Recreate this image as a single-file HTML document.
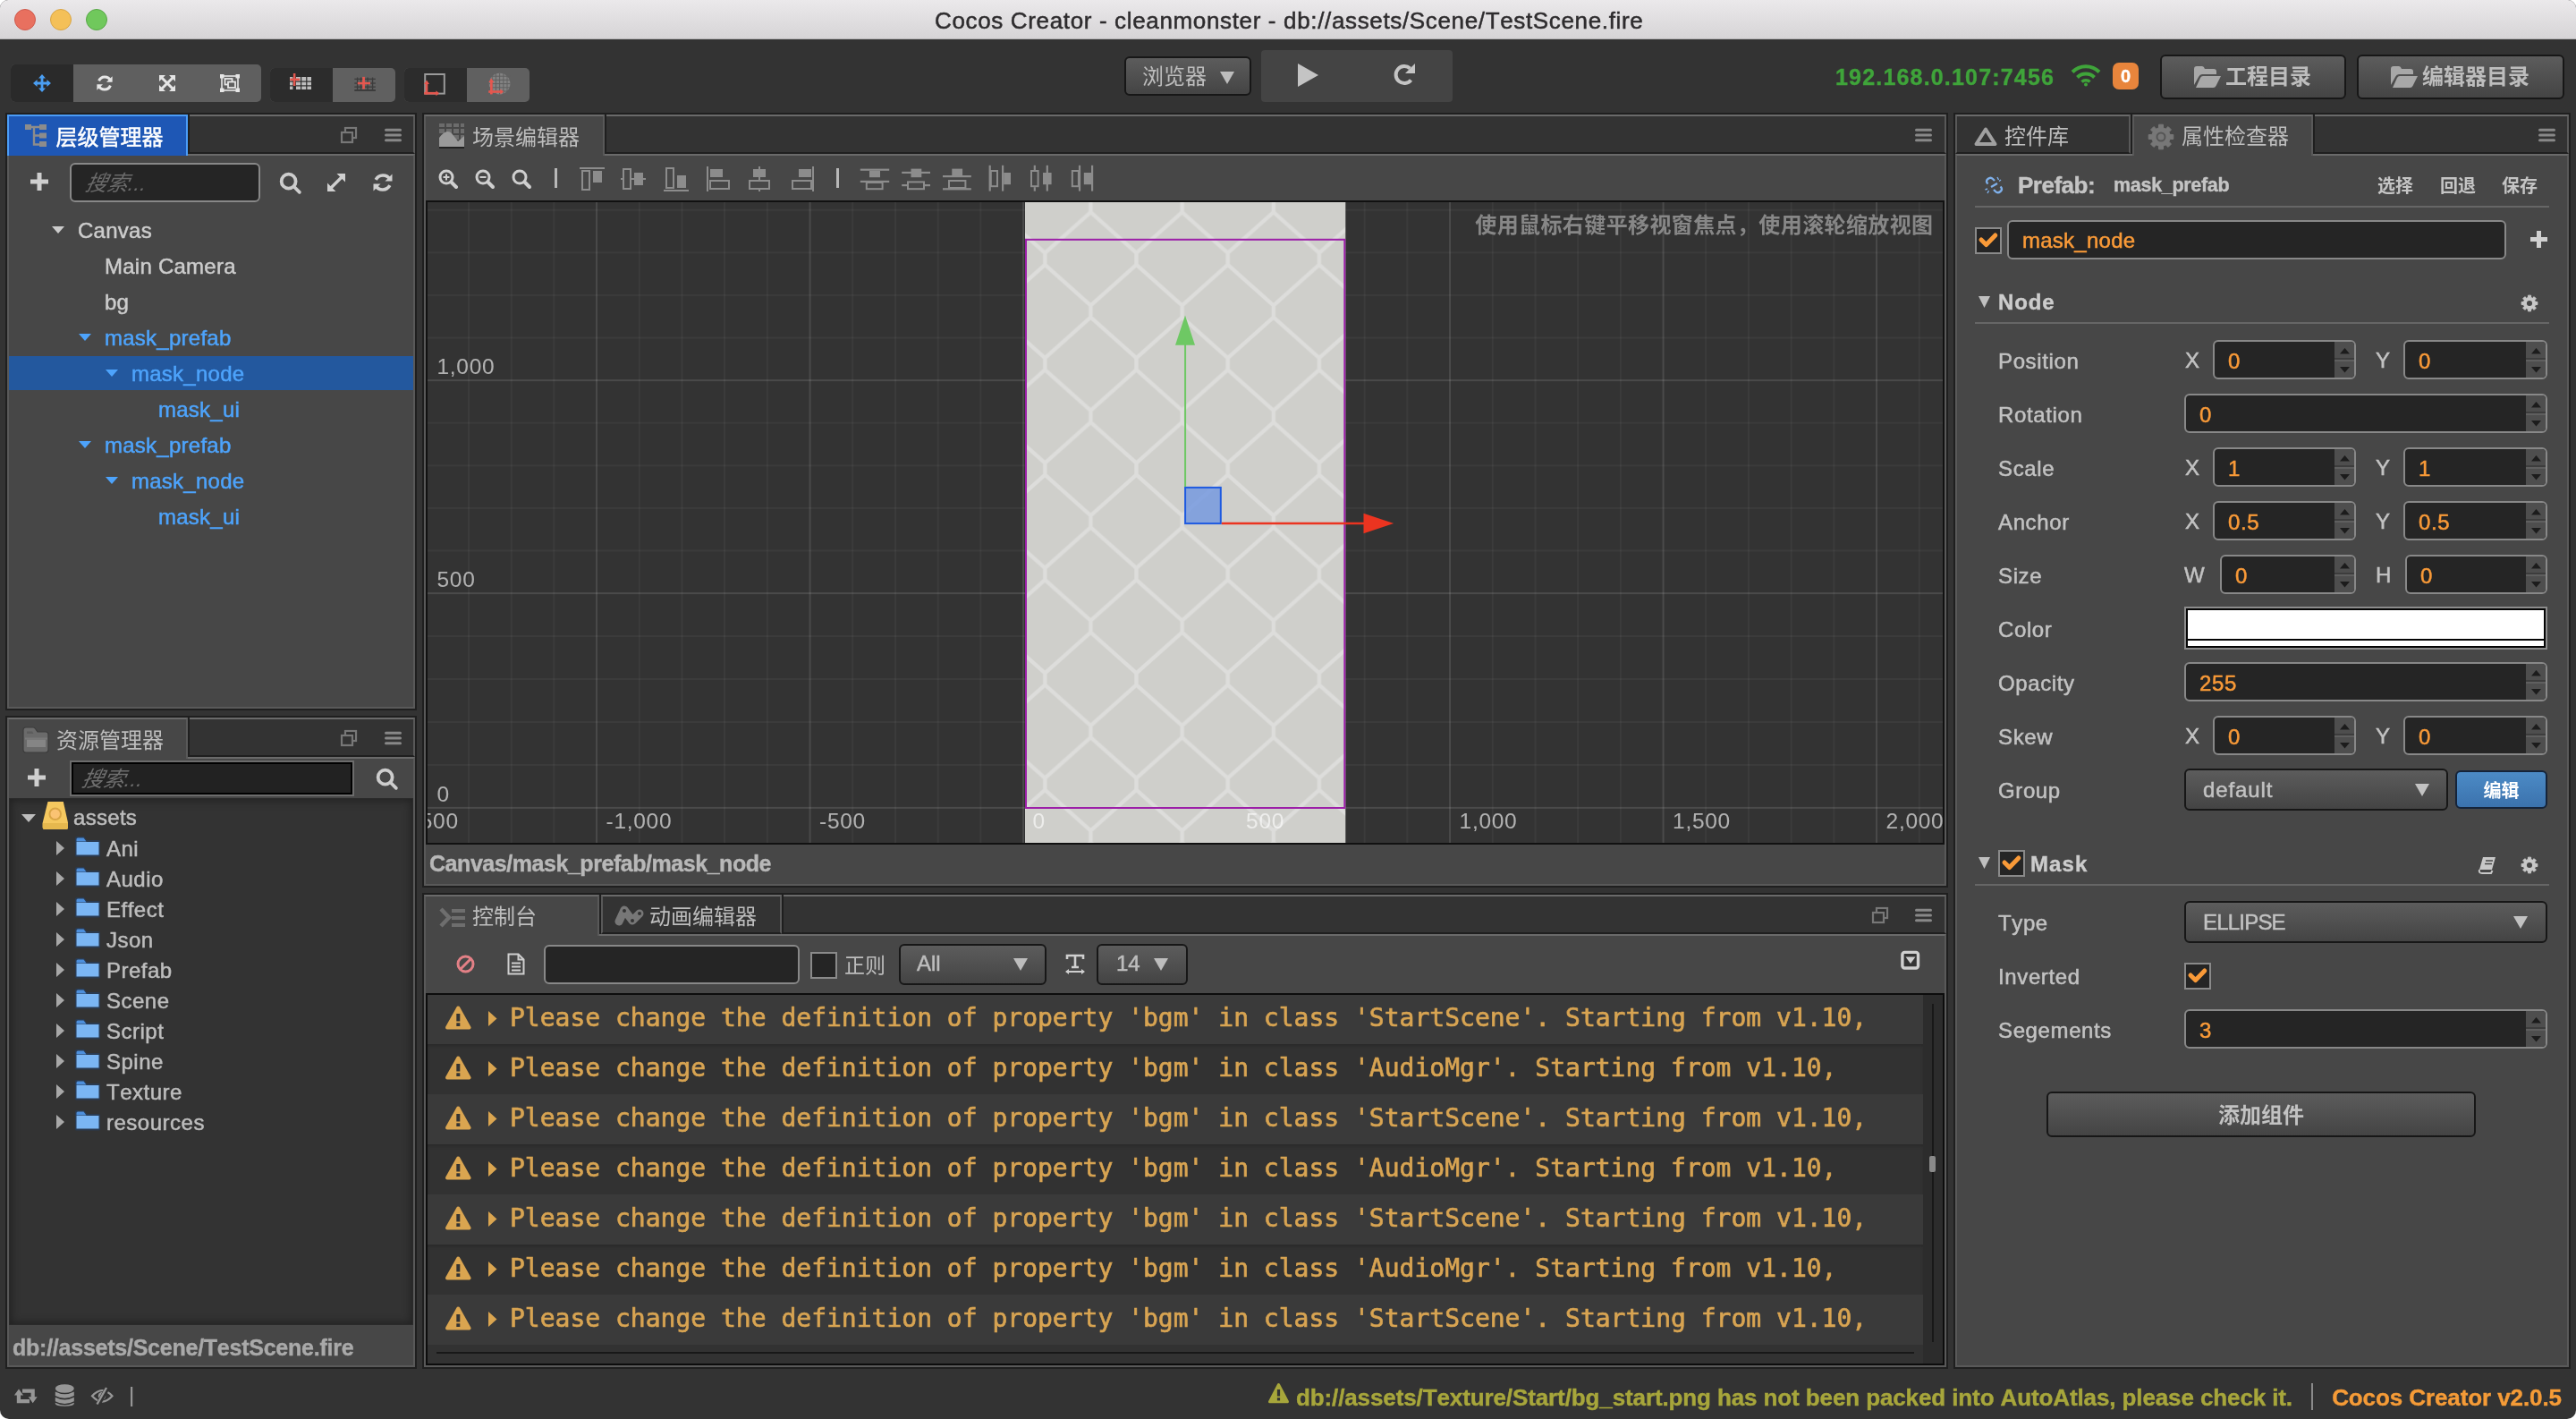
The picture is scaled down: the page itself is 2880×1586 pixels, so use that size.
<!DOCTYPE html>
<html lang="zh"><head><meta charset="utf-8"><title>Cocos Creator - cleanmonster - db://assets/Scene/TestScene.fire</title>
<style>
html,body{margin:0;padding:0;background:#fff;}
body{width:2880px;height:1586px;overflow:hidden;font-family:"Liberation Sans","Noto Sans CJK SC",sans-serif;font-kerning:none;}
#win{position:absolute;left:0;top:0;width:2880px;height:1586px;background:#333333;will-change:transform;border-radius:9px 9px 10px 10px;overflow:hidden;}
.a{position:absolute;box-sizing:border-box;}
.t{position:absolute;white-space:nowrap;-webkit-text-stroke:0.5px currentColor;}
.m{font-family:"DejaVu Sans Mono","Liberation Mono",monospace;}
svg{position:absolute;overflow:visible;}
.inp{position:absolute;box-sizing:border-box;background:#252525;border:2px solid #888;border-radius:6px;}
.btn{position:absolute;box-sizing:border-box;border:2px solid #171717;border-radius:6px;background:linear-gradient(#5c5c5c,#444444);}
</style></head><body><div id="win">
<div class="a" style="left:0px;top:0px;width:2880px;height:44px;background:linear-gradient(#ebe9eb,#d6d4d6);border-bottom:1px solid #b4b2b4;"></div>
<div class="a" style="left:16px;top:10px;width:24px;height:24px;background:#e8705f;border-radius:50%;border:1px solid #cf5a4d;"></div>
<div class="a" style="left:56px;top:10px;width:24px;height:24px;background:#f4c058;border-radius:50%;border:1px solid #d9a545;"></div>
<div class="a" style="left:96px;top:10px;width:24px;height:24px;background:#70c85c;border-radius:50%;border:1px solid #58a748;"></div>
<div class="t " style="top:-3px;height:52px;line-height:52px;font-size:26px;color:#2e2c2e;letter-spacing:0.65px;left:1045px;">Cocos Creator - cleanmonster - db://assets/Scene/TestScene.fire</div>
<div class="a" style="left:12px;top:72px;width:280px;height:42px;background:#5f5f5f;border-radius:5px;"></div>
<div class="a" style="left:12px;top:72px;width:70px;height:42px;background:#2a2a2a;border-radius:5px 0 0 5px;"></div>
<svg style="left:37px;top:83px;" width="20" height="20" viewBox="0 0 20 20"><path d="M10 0l4 4.6h-2.6v4h4V6l4.6 4-4.6 4v-2.600h-4v4h2.600L10 20l-4-4.600h2.600v-4h-4V14L0 10l4.600-4v2.600h4v-4H6z" fill="#4a9ef2"/></svg>
<svg style="left:108px;top:84px;" width="18" height="18" viewBox="0 0 18 18"><path d="M15.500 6.200A7 7 0 0 0 2.600 6.400" fill="none" stroke="#e6e6e6" stroke-width="3"/><path d="M17.600 1.200v6.600h-6.600z" fill="#e6e6e6"/><path d="M2.500 11.800A7 7 0 0 0 15.400 11.600" fill="none" stroke="#e6e6e6" stroke-width="3"/><path d="M0.400 16.800v-6.600h6.600z" fill="#e6e6e6"/></svg>
<svg style="left:178px;top:84px;" width="18" height="18" viewBox="0 0 18 18"><path d="M3 3L15 15M15 3L3 15" stroke="#e6e6e6" stroke-width="3"/><path d="M0 0h7L0 7zM18 0v7L11 0zM0 18v-7l7 7zM18 18h-7l7-7z" fill="#e6e6e6"/></svg>
<svg style="left:246px;top:83px;" width="22" height="20" viewBox="0 0 22 20"><rect x="2" y="2" width="18" height="16" fill="none" stroke="#e6e6e6" stroke-width="1.600"/><rect x="0" y="0" width="4.500" height="4.500" fill="#e6e6e6"/><rect x="17.500" y="0" width="4.500" height="4.500" fill="#e6e6e6"/><rect x="0" y="15.500" width="4.500" height="4.500" fill="#e6e6e6"/><rect x="17.500" y="15.500" width="4.500" height="4.500" fill="#e6e6e6"/><rect x="5.500" y="5" width="8" height="6.500" fill="none" stroke="#e6e6e6" stroke-width="1.800"/><rect x="9" y="8.500" width="8" height="6.500" fill="#5f5f5f" stroke="#e6e6e6" stroke-width="1.800"/></svg>
<div class="a" style="left:302px;top:76px;width:140px;height:38px;background:#606060;border-radius:5px;"></div>
<div class="a" style="left:302px;top:76px;width:70px;height:38px;background:#2c2c2c;border-radius:5px 0 0 5px;"></div>
<div class="a" style="left:452px;top:76px;width:140px;height:38px;background:#606060;border-radius:5px;"></div>
<div class="a" style="left:452px;top:76px;width:70px;height:38px;background:#2c2c2c;border-radius:5px 0 0 5px;"></div>
<svg style="left:300px;top:74px;" width="296" height="42" viewBox="300 74 296 42"><rect x="324" y="86" width="3.4" height="4.5" fill="#bdbdbd"/><rect x="331" y="86" width="5.0" height="4.5" fill="#bdbdbd"/><rect x="337.2" y="86" width="5.0" height="4.5" fill="#bdbdbd"/><rect x="343.4" y="86" width="4.6" height="4.5" fill="#bdbdbd"/><rect x="324" y="91.7" width="3.4" height="3.6" fill="#bdbdbd"/><rect x="331" y="91.7" width="5.0" height="3.6" fill="#bdbdbd"/><rect x="337.2" y="91.7" width="5.0" height="3.6" fill="#bdbdbd"/><rect x="343.4" y="91.7" width="4.6" height="3.6" fill="#bdbdbd"/><rect x="324" y="96.5" width="3.4" height="3.5" fill="#bdbdbd"/><rect x="331" y="96.5" width="5.0" height="3.5" fill="#bdbdbd"/><rect x="337.2" y="96.5" width="5.0" height="3.5" fill="#bdbdbd"/><rect x="343.4" y="96.5" width="4.6" height="3.5" fill="#bdbdbd"/><rect x="327.900" y="82" width="2.500" height="14" fill="#e5574f"/><rect x="324.300" y="87.600" width="10.700" height="2.500" fill="#e5574f"/><rect x="396.300" y="87.7" width="23.600" height="1.300" fill="#3c3c3c"/><rect x="396.300" y="92.4" width="23.600" height="1.300" fill="#3c3c3c"/><rect x="396.300" y="96.5" width="23.600" height="1.300" fill="#3c3c3c"/><rect x="396.300" y="100" width="23.600" height="2" fill="#3c3c3c"/><rect x="398.9" y="86.500" width="1.300" height="14" fill="#3c3c3c"/><rect x="402.9" y="86.500" width="1.300" height="14" fill="#3c3c3c"/><rect x="410.4" y="86.500" width="1.300" height="14" fill="#3c3c3c"/><rect x="415.9" y="86.500" width="1.300" height="14" fill="#3c3c3c"/><rect x="405.200" y="85.900" width="2.700" height="13.600" fill="#e5574f"/><rect x="399.800" y="91.800" width="14.200" height="2.500" fill="#e5574f"/><rect x="475.200" y="83" width="21.600" height="21.600" fill="none" stroke="#9a9a9a" stroke-width="2"/><rect x="475.600" y="92" width="2.700" height="13.400" fill="#e5574f"/><rect x="474.200" y="102.900" width="14" height="2.600" fill="#e5574f"/><path d="M474 94L477 89.500L480 94ZM487.500 101.200L491 104.200L487.500 107.200Z" fill="#e5574f"/><circle cx="558.600" cy="93.600" r="11.800" fill="#828282"/><rect x="549.7" y="82" width="1" height="23.500" fill="#606060"/><rect x="547" y="84.7" width="23.500" height="1" fill="#606060"/><rect x="553.9" y="82" width="1" height="23.500" fill="#606060"/><rect x="547" y="88.9" width="23.500" height="1" fill="#606060"/><rect x="558.1" y="82" width="1" height="23.500" fill="#606060"/><rect x="547" y="93.1" width="23.500" height="1" fill="#606060"/><rect x="562.3" y="82" width="1" height="23.500" fill="#606060"/><rect x="547" y="97.3" width="23.500" height="1" fill="#606060"/><rect x="566.5" y="82" width="1" height="23.500" fill="#606060"/><rect x="547" y="101.5" width="23.500" height="1" fill="#606060"/><rect x="548" y="90" width="2.700" height="15.400" fill="#e5574f"/><rect x="546.200" y="101.200" width="14" height="2.600" fill="#e5574f"/><path d="M546.300 92L549.300 87.500L552.300 92ZM559.500 99.500L563 102.500L559.500 105.500Z" fill="#e5574f"/></svg>
<div class="btn" style="left:1257px;top:63px;width:142px;height:44px;"></div>
<div class="t " style="top:62px;height:48px;line-height:48px;font-size:24px;color:#bdbdbd;left:1277px;-webkit-text-stroke:0;">浏览器</div>
<svg style="left:1364.0px;top:80.0px;" width="16" height="14" viewBox="0 0 16 14"><path d="M0 0H16L8.0 14Z" fill="#bdbdbd"/></svg>
<div class="a" style="left:1410px;top:56px;width:214px;height:58px;background:#444444;border-radius:4px;"></div>
<svg style="left:1451px;top:71px;" width="23" height="26" viewBox="0 0 23 26"><path d="M0 0L23 13L0 26Z" fill="#c4c4c4"/></svg>
<svg style="left:1557px;top:70px;" width="26" height="27" viewBox="0 0 26 27"><path d="M20.500 19.500A9.500 9.500 0 1 1 19.500 6.500" fill="none" stroke="#c4c4c4" stroke-width="4"/><path d="M25 1v11h-11z" fill="#c4c4c4"/></svg>
<div class="t " style="top:61px;height:50px;line-height:50px;font-size:25px;color:#3fa43a;font-weight:700;-webkit-text-stroke-width:0.4px;letter-spacing:1.18px;left:2052px;">192.168.0.107:7456</div>
<svg style="left:2315px;top:72px;" width="34" height="24" viewBox="0 0 34 24"><path d="M2 8.500A21 21 0 0 1 32 8.500" fill="none" stroke="#3fa43a" stroke-width="4"/><path d="M7.500 14.500A13.500 13.500 0 0 1 26.500 14.500" fill="none" stroke="#3fa43a" stroke-width="4"/><path d="M12.500 19.500A6.500 6.500 0 0 1 21.500 19.500" fill="none" stroke="#3fa43a" stroke-width="3.600"/><circle cx="17" cy="22.500" r="2" fill="#3fa43a"/></svg>
<div class="a" style="left:2362px;top:70px;width:29px;height:30px;background:#e8853c;border-radius:7px;"></div>
<div class="t " style="top:65px;height:40px;line-height:40px;font-size:20px;color:#fff;font-weight:700;-webkit-text-stroke-width:0.4px;left:1376.5px;width:2000px;text-align:center;">0</div>
<div class="btn" style="left:2415px;top:61px;width:208px;height:50px;"></div>
<svg style="left:2453px;top:74px;" width="30" height="24" viewBox="0 0 30 24"><path d="M0 21V3q0-3 3-3h6q2 0 3 3h10q3 0 3 3v3H9q-2.500 0-4 3z" fill="#a8a8a8"/><path d="M2 24l5-11q1-2 3-2h20l-5.500 11q-1 2-3 2z" fill="#a8a8a8"/></svg>
<div class="t " style="top:62.400000000000006px;height:48px;line-height:48px;font-size:24px;color:#bdbdbd;font-weight:700;-webkit-text-stroke-width:0.4px;left:2488px;-webkit-text-stroke:0;">工程目录</div>
<div class="btn" style="left:2635px;top:61px;width:232px;height:50px;"></div>
<svg style="left:2673px;top:74px;" width="30" height="24" viewBox="0 0 30 24"><path d="M0 21V3q0-3 3-3h6q2 0 3 3h10q3 0 3 3v3H9q-2.500 0-4 3z" fill="#a8a8a8"/><path d="M2 24l5-11q1-2 3-2h20l-5.500 11q-1 2-3 2z" fill="#a8a8a8"/></svg>
<div class="t " style="top:62.400000000000006px;height:48px;line-height:48px;font-size:24px;color:#bdbdbd;font-weight:700;-webkit-text-stroke-width:0.4px;left:2708px;-webkit-text-stroke:0;">编辑器目录</div>
<div class="a" style="left:6px;top:126px;width:460px;height:668px;background:#1f1f1f;"></div>
<div class="a" style="left:8px;top:128px;width:456px;height:44px;background:#333333;border-top:2px solid #6a6a6a;border-left:2px solid #595959;border-right:2px solid #595959;border-bottom:2px solid #1f1f1f;"></div>
<div class="a" style="left:8px;top:172px;width:456px;height:620px;background:#474747;border:2px solid #595959;border-top-color:#6a6a6a;"></div>
<div class="a" style="left:8px;top:128px;width:202px;height:46px;background:#1e57b5;border:2px solid #4b9cf6;border-bottom:none;"></div>
<div class="a" style="left:210px;top:128px;width:2px;height:44px;background:#1f1f1f;"></div>
<svg style="left:28px;top:139px;" width="24" height="26" viewBox="0 0 24 26"><g fill="#8c8c8c"><rect x="0" y="0" width="7" height="6"/><rect x="16" y="0" width="8" height="6"/><rect x="16" y="9.500" width="8" height="6"/><rect x="16" y="19" width="8" height="6"/></g><path d="M7 3h9M10 3v19.500h6M10 12.500h6" fill="none" stroke="#8c8c8c" stroke-width="2.400"/></svg>
<div class="t " style="top:129.6px;height:48px;line-height:48px;font-size:24px;color:#ffffff;left:62.5px;-webkit-text-stroke:0;-webkit-text-stroke:0.45px #fff;">层级管理器</div>
<svg style="left:381px;top:142px;" width="18" height="18" viewBox="0 0 18 18"><rect x="5" y="1" width="12" height="11" fill="#2c2c2c" stroke="#777" stroke-width="2.200"/><rect x="1" y="6" width="12" height="11" fill="#333" stroke="#777" stroke-width="2.200"/></svg>
<svg style="left:429.5px;top:143px;" width="19" height="16" viewBox="0 0 19 16"><path d="M1.500 2.200h16M1.500 8h16M1.500 13.800h16" stroke="#888" stroke-width="3" stroke-linecap="round" fill="none"/></svg>
<svg style="left:34.0px;top:193.0px;" width="20" height="20" viewBox="0 0 20 20"><path d="M10.0 0V20M0 10.0H20" stroke="#cfcfcf" stroke-width="5" /></svg>
<div class="inp" style="left:78px;top:182px;width:213px;height:43.5px;"></div>
<div class="t " style="top:181px;height:48px;line-height:48px;font-size:24px;color:#6a6a6a;left:96px;-webkit-text-stroke:0;font-style:italic;transform:skewX(-12deg);">搜索...</div>
<svg style="left:312.75px;top:193.05px;" width="23.5" height="23.5" viewBox="0 0 23.5 23.5"><circle cx="9.635" cy="9.635" r="7.99" fill="none" stroke="#cdcdcd" stroke-width="3.7600000000000002"/><path d="M15.510000000000002 15.510000000000002L21.855 21.855" stroke="#cdcdcd" stroke-width="3.7600000000000002" stroke-linecap="round"/></svg>
<svg style="left:366px;top:194px;" width="20" height="20" viewBox="0 0 20 20"><path d="M4 16L16 4" stroke="#cfcfcf" stroke-width="3.400"/><path d="M10.500 0H20V9.500zM0 10.500V20H9.500z" fill="#cfcfcf"/></svg>
<svg style="left:417.0px;top:193.0px;" width="22" height="22" viewBox="0 0 22 22"><path d="M19 7.500A9 9 0 0 0 3.200 7.800" fill="none" stroke="#cfcfcf" stroke-width="3.600"/><path d="M21.500 1.500v8h-8z" fill="#cfcfcf"/><path d="M3 14.500A9 9 0 0 0 18.800 14.200" fill="none" stroke="#cfcfcf" stroke-width="3.600"/><path d="M0.500 20.500v-8h8z" fill="#cfcfcf"/></svg>
<svg style="left:58.0px;top:253.0px;" width="14" height="8" viewBox="0 0 14 8"><path d="M0 0H14L7.0 8Z" fill="#cccccc"/></svg>
<div class="t " style="top:234px;height:48px;line-height:48px;font-size:24px;color:#cccccc;letter-spacing:0.25px;left:87px;">Canvas</div>
<div class="t " style="top:274px;height:48px;line-height:48px;font-size:24px;color:#cccccc;letter-spacing:0.25px;left:117px;">Main Camera</div>
<div class="t " style="top:314px;height:48px;line-height:48px;font-size:24px;color:#cccccc;letter-spacing:0.25px;left:117px;">bg</div>
<svg style="left:88.0px;top:373.0px;" width="14" height="8" viewBox="0 0 14 8"><path d="M0 0H14L7.0 8Z" fill="#4da3fb"/></svg>
<div class="t " style="top:354px;height:48px;line-height:48px;font-size:24px;color:#4da3fb;letter-spacing:0.25px;left:117px;">mask_prefab</div>
<div class="a" style="left:10px;top:398px;width:452px;height:38px;background:#23589e;"></div>
<svg style="left:118.0px;top:413.0px;" width="14" height="8" viewBox="0 0 14 8"><path d="M0 0H14L7.0 8Z" fill="#4da3fb"/></svg>
<div class="t " style="top:394px;height:48px;line-height:48px;font-size:24px;color:#4da3fb;letter-spacing:0.25px;left:147px;">mask_node</div>
<div class="t " style="top:434px;height:48px;line-height:48px;font-size:24px;color:#4da3fb;letter-spacing:0.25px;left:177px;">mask_ui</div>
<svg style="left:88.0px;top:493.0px;" width="14" height="8" viewBox="0 0 14 8"><path d="M0 0H14L7.0 8Z" fill="#4da3fb"/></svg>
<div class="t " style="top:474px;height:48px;line-height:48px;font-size:24px;color:#4da3fb;letter-spacing:0.25px;left:117px;">mask_prefab</div>
<svg style="left:118.0px;top:533.0px;" width="14" height="8" viewBox="0 0 14 8"><path d="M0 0H14L7.0 8Z" fill="#4da3fb"/></svg>
<div class="t " style="top:514px;height:48px;line-height:48px;font-size:24px;color:#4da3fb;letter-spacing:0.25px;left:147px;">mask_node</div>
<div class="t " style="top:554px;height:48px;line-height:48px;font-size:24px;color:#4da3fb;letter-spacing:0.25px;left:177px;">mask_ui</div>
<div class="a" style="left:6px;top:800px;width:460px;height:730px;background:#1f1f1f;"></div>
<div class="a" style="left:8px;top:802px;width:456px;height:44px;background:#333333;border-top:2px solid #6a6a6a;border-left:2px solid #595959;border-right:2px solid #595959;border-bottom:2px solid #1f1f1f;"></div>
<div class="a" style="left:8px;top:846px;width:456px;height:682px;background:#474747;border:2px solid #595959;border-top-color:#6a6a6a;"></div>
<div class="a" style="left:8px;top:802px;width:202px;height:46px;background:#474747;border-top:2px solid #6a6a6a;border-left:2px solid #595959;border-right:2px solid #595959;"></div>
<div class="a" style="left:210px;top:802px;width:2px;height:44px;background:#1f1f1f;"></div>
<svg style="left:25px;top:812px;" width="31" height="30" viewBox="0 0 31 30"><path d="M1 4q0-3 3-3h8q1.500 0 2.500 1.500l2.500 3.500h9q3 0 3 3v17q0 3-3 3H4q-3 0-3-3z" fill="#6b6b6b" stroke="#3c3c3c" stroke-width="1.200"/><path d="M5 5.500h6l1.500 2.500H5z" fill="#5c5c5c"/><rect x="5" y="14.500" width="21" height="8.500" fill="#858585"/><rect x="3" y="12.500" width="25" height="2" fill="#7a7a7a"/></svg>
<div class="t " style="top:803.5px;height:48px;line-height:48px;font-size:24px;color:#bdbdbd;left:63px;-webkit-text-stroke:0;">资源管理器</div>
<svg style="left:381px;top:816px;" width="18" height="18" viewBox="0 0 18 18"><rect x="5" y="1" width="12" height="11" fill="#2c2c2c" stroke="#777" stroke-width="2.200"/><rect x="1" y="6" width="12" height="11" fill="#333" stroke="#777" stroke-width="2.200"/></svg>
<svg style="left:429.5px;top:817px;" width="19" height="16" viewBox="0 0 19 16"><path d="M1.500 2.200h16M1.500 8h16M1.500 13.800h16" stroke="#888" stroke-width="3" stroke-linecap="round" fill="none"/></svg>
<svg style="left:31.0px;top:859.0px;" width="20" height="20" viewBox="0 0 20 20"><path d="M10.0 0V20M0 10.0H20" stroke="#cfcfcf" stroke-width="5" /></svg>
<div class="a" style="left:78px;top:850px;width:318px;height:40px;background:#222222;border:2px solid #6c6c6c;"></div>
<div class="a" style="left:80px;top:852px;width:314px;height:36px;background:#222222;border:2px solid #000;"></div>
<div class="t " style="top:847px;height:48px;line-height:48px;font-size:24px;color:#6e6e6e;left:92px;-webkit-text-stroke:0;font-style:italic;transform:skewX(-12deg);">搜索...</div>
<svg style="left:421.05px;top:858.75px;" width="23.5" height="23.5" viewBox="0 0 23.5 23.5"><circle cx="9.635" cy="9.635" r="7.99" fill="none" stroke="#cdcdcd" stroke-width="3.7600000000000002"/><path d="M15.510000000000002 15.510000000000002L21.855 21.855" stroke="#cdcdcd" stroke-width="3.7600000000000002" stroke-linecap="round"/></svg>
<div class="a" style="left:10px;top:892px;width:452px;height:589px;background:#333333;box-shadow:inset 0 0 10px 2px #232323;border:1px solid #2a2a2a;"></div>
<svg style="left:24.0px;top:910.0px;" width="16" height="9" viewBox="0 0 16 9"><path d="M0 0H16L8.0 9Z" fill="#bdbdbd"/></svg>
<svg style="left:47px;top:895px;" width="30" height="34" viewBox="0 0 30 34"><path d="M6.500 1H23.800L29 24.500V30q0 2-2 2H2.700q-2 0-2-2V24.500Z" fill="#f5c85f"/><path d="M0.700 25H29v5q0 2-2 2H2.700q-2 0-2-2Z" fill="#e6b84e"/><circle cx="14.700" cy="14.800" r="6.300" fill="#fac373" stroke="#d9a545" stroke-width="2"/></svg>
<div class="t " style="top:890px;height:48px;line-height:48px;font-size:24px;color:#bdbdbd;letter-spacing:0.3px;left:82px;">assets</div>
<svg style="left:63.0px;top:940.0px;" width="9" height="16" viewBox="0 0 9 16"><path d="M0 0V16L9 8.0Z" fill="#a8a8a8"/></svg>
<svg style="left:83px;top:933.5px;" width="30" height="24" viewBox="0 0 30 24"><path d="M1 3q0-2 2-2h8l3 4h13q2 0 2 2v15q0 1.500-1.500 1.500h-25q-1.500 0-1.500-1.500z" fill="#2a3b52"/><path d="M2.500 4q0-1.500 1.500-1.500h6.500l3 4h-11z" fill="#4d8fdc"/><path d="M2.500 7h25v14.500h-25z" fill="#7bb6f4"/></svg>
<div class="t " style="top:924.5px;height:48px;line-height:48px;font-size:24px;color:#bdbdbd;letter-spacing:0.5px;left:119px;">Ani</div>
<svg style="left:63.0px;top:974.0px;" width="9" height="16" viewBox="0 0 9 16"><path d="M0 0V16L9 8.0Z" fill="#a8a8a8"/></svg>
<svg style="left:83px;top:967.5px;" width="30" height="24" viewBox="0 0 30 24"><path d="M1 3q0-2 2-2h8l3 4h13q2 0 2 2v15q0 1.500-1.500 1.500h-25q-1.500 0-1.500-1.500z" fill="#2a3b52"/><path d="M2.500 4q0-1.500 1.500-1.500h6.500l3 4h-11z" fill="#4d8fdc"/><path d="M2.500 7h25v14.500h-25z" fill="#7bb6f4"/></svg>
<div class="t " style="top:958.5px;height:48px;line-height:48px;font-size:24px;color:#bdbdbd;letter-spacing:0.5px;left:119px;">Audio</div>
<svg style="left:63.0px;top:1008.0px;" width="9" height="16" viewBox="0 0 9 16"><path d="M0 0V16L9 8.0Z" fill="#a8a8a8"/></svg>
<svg style="left:83px;top:1001.5px;" width="30" height="24" viewBox="0 0 30 24"><path d="M1 3q0-2 2-2h8l3 4h13q2 0 2 2v15q0 1.500-1.500 1.500h-25q-1.500 0-1.500-1.500z" fill="#2a3b52"/><path d="M2.500 4q0-1.500 1.500-1.500h6.500l3 4h-11z" fill="#4d8fdc"/><path d="M2.500 7h25v14.500h-25z" fill="#7bb6f4"/></svg>
<div class="t " style="top:992.5px;height:48px;line-height:48px;font-size:24px;color:#bdbdbd;letter-spacing:0.5px;left:119px;">Effect</div>
<svg style="left:63.0px;top:1042.0px;" width="9" height="16" viewBox="0 0 9 16"><path d="M0 0V16L9 8.0Z" fill="#a8a8a8"/></svg>
<svg style="left:83px;top:1035.5px;" width="30" height="24" viewBox="0 0 30 24"><path d="M1 3q0-2 2-2h8l3 4h13q2 0 2 2v15q0 1.500-1.500 1.500h-25q-1.500 0-1.500-1.500z" fill="#2a3b52"/><path d="M2.500 4q0-1.500 1.500-1.500h6.500l3 4h-11z" fill="#4d8fdc"/><path d="M2.500 7h25v14.500h-25z" fill="#7bb6f4"/></svg>
<div class="t " style="top:1026.5px;height:48px;line-height:48px;font-size:24px;color:#bdbdbd;letter-spacing:0.5px;left:119px;">Json</div>
<svg style="left:63.0px;top:1076.0px;" width="9" height="16" viewBox="0 0 9 16"><path d="M0 0V16L9 8.0Z" fill="#a8a8a8"/></svg>
<svg style="left:83px;top:1069.5px;" width="30" height="24" viewBox="0 0 30 24"><path d="M1 3q0-2 2-2h8l3 4h13q2 0 2 2v15q0 1.500-1.500 1.500h-25q-1.500 0-1.500-1.500z" fill="#2a3b52"/><path d="M2.500 4q0-1.500 1.500-1.500h6.500l3 4h-11z" fill="#4d8fdc"/><path d="M2.500 7h25v14.500h-25z" fill="#7bb6f4"/></svg>
<div class="t " style="top:1060.5px;height:48px;line-height:48px;font-size:24px;color:#bdbdbd;letter-spacing:0.5px;left:119px;">Prefab</div>
<svg style="left:63.0px;top:1110.0px;" width="9" height="16" viewBox="0 0 9 16"><path d="M0 0V16L9 8.0Z" fill="#a8a8a8"/></svg>
<svg style="left:83px;top:1103.5px;" width="30" height="24" viewBox="0 0 30 24"><path d="M1 3q0-2 2-2h8l3 4h13q2 0 2 2v15q0 1.500-1.500 1.500h-25q-1.500 0-1.500-1.500z" fill="#2a3b52"/><path d="M2.500 4q0-1.500 1.500-1.500h6.500l3 4h-11z" fill="#4d8fdc"/><path d="M2.500 7h25v14.500h-25z" fill="#7bb6f4"/></svg>
<div class="t " style="top:1094.5px;height:48px;line-height:48px;font-size:24px;color:#bdbdbd;letter-spacing:0.5px;left:119px;">Scene</div>
<svg style="left:63.0px;top:1144.0px;" width="9" height="16" viewBox="0 0 9 16"><path d="M0 0V16L9 8.0Z" fill="#a8a8a8"/></svg>
<svg style="left:83px;top:1137.5px;" width="30" height="24" viewBox="0 0 30 24"><path d="M1 3q0-2 2-2h8l3 4h13q2 0 2 2v15q0 1.500-1.500 1.500h-25q-1.500 0-1.500-1.500z" fill="#2a3b52"/><path d="M2.500 4q0-1.500 1.500-1.500h6.500l3 4h-11z" fill="#4d8fdc"/><path d="M2.500 7h25v14.500h-25z" fill="#7bb6f4"/></svg>
<div class="t " style="top:1128.5px;height:48px;line-height:48px;font-size:24px;color:#bdbdbd;letter-spacing:0.5px;left:119px;">Script</div>
<svg style="left:63.0px;top:1178.0px;" width="9" height="16" viewBox="0 0 9 16"><path d="M0 0V16L9 8.0Z" fill="#a8a8a8"/></svg>
<svg style="left:83px;top:1171.5px;" width="30" height="24" viewBox="0 0 30 24"><path d="M1 3q0-2 2-2h8l3 4h13q2 0 2 2v15q0 1.500-1.500 1.500h-25q-1.500 0-1.500-1.500z" fill="#2a3b52"/><path d="M2.500 4q0-1.500 1.500-1.500h6.500l3 4h-11z" fill="#4d8fdc"/><path d="M2.500 7h25v14.500h-25z" fill="#7bb6f4"/></svg>
<div class="t " style="top:1162.5px;height:48px;line-height:48px;font-size:24px;color:#bdbdbd;letter-spacing:0.5px;left:119px;">Spine</div>
<svg style="left:63.0px;top:1212.0px;" width="9" height="16" viewBox="0 0 9 16"><path d="M0 0V16L9 8.0Z" fill="#a8a8a8"/></svg>
<svg style="left:83px;top:1205.5px;" width="30" height="24" viewBox="0 0 30 24"><path d="M1 3q0-2 2-2h8l3 4h13q2 0 2 2v15q0 1.500-1.500 1.500h-25q-1.500 0-1.500-1.500z" fill="#2a3b52"/><path d="M2.500 4q0-1.500 1.500-1.500h6.500l3 4h-11z" fill="#4d8fdc"/><path d="M2.500 7h25v14.500h-25z" fill="#7bb6f4"/></svg>
<div class="t " style="top:1196.5px;height:48px;line-height:48px;font-size:24px;color:#bdbdbd;letter-spacing:0.5px;left:119px;">Texture</div>
<svg style="left:63.0px;top:1246.0px;" width="9" height="16" viewBox="0 0 9 16"><path d="M0 0V16L9 8.0Z" fill="#a8a8a8"/></svg>
<svg style="left:83px;top:1239.5px;" width="30" height="24" viewBox="0 0 30 24"><path d="M1 3q0-2 2-2h8l3 4h13q2 0 2 2v15q0 1.500-1.500 1.500h-25q-1.500 0-1.500-1.500z" fill="#2a3b52"/><path d="M2.500 4q0-1.500 1.500-1.500h6.500l3 4h-11z" fill="#4d8fdc"/><path d="M2.500 7h25v14.500h-25z" fill="#7bb6f4"/></svg>
<div class="t " style="top:1230.5px;height:48px;line-height:48px;font-size:24px;color:#bdbdbd;letter-spacing:0.5px;left:119px;">resources</div>
<div class="t " style="top:1481px;height:50px;line-height:50px;font-size:25px;color:#a9a9a9;font-weight:700;-webkit-text-stroke-width:0.4px;letter-spacing:-0.24px;left:14px;">db://assets/Scene/TestScene.fire</div>
<div class="a" style="left:472px;top:126px;width:1706px;height:866px;background:#1f1f1f;"></div>
<div class="a" style="left:474px;top:128px;width:1702px;height:44px;background:#333333;border-top:2px solid #6a6a6a;border-left:2px solid #595959;border-right:2px solid #595959;border-bottom:2px solid #1f1f1f;"></div>
<div class="a" style="left:474px;top:172px;width:1702px;height:818px;background:#474747;border:2px solid #595959;border-top-color:#6a6a6a;"></div>
<div class="a" style="left:474px;top:128px;width:202px;height:46px;background:#474747;border-top:2px solid #6a6a6a;border-left:2px solid #595959;border-right:2px solid #595959;"></div>
<div class="a" style="left:676px;top:128px;width:2px;height:44px;background:#1f1f1f;"></div>
<svg style="left:491px;top:137px;" width="30" height="30" viewBox="0 0 30 30"><g fill="#6c6c6c"><rect x="0" y="1" width="6" height="4"/><rect x="8" y="1" width="6" height="4"/><rect x="16" y="1" width="6" height="4"/><rect x="24" y="1" width="4" height="4"/><rect x="0" y="7" width="6" height="5"/><rect x="8" y="7" width="6" height="5"/><rect x="16" y="7" width="6" height="5"/><rect x="24" y="7" width="4" height="5"/><rect x="16" y="14" width="6" height="5"/><rect x="24" y="14" width="4" height="5"/></g><path d="M0 27V17Q8 6 14 12L21 21L28 15V27Z" fill="#9a9a9a"/><rect x="0" y="27" width="28" height="2" fill="#222"/></svg>
<div class="t " style="top:130px;height:48px;line-height:48px;font-size:24px;color:#bdbdbd;left:528px;-webkit-text-stroke:0;">场景编辑器</div>
<svg style="left:2140.5px;top:143px;" width="19" height="16" viewBox="0 0 19 16"><path d="M1.500 2.200h16M1.500 8h16M1.500 13.800h16" stroke="#888" stroke-width="3" stroke-linecap="round" fill="none"/></svg>
<svg style="left:490px;top:189px;" width="22" height="22" viewBox="0 0 22 22"><circle cx="9" cy="9" r="7" fill="none" stroke="#cfcfcf" stroke-width="3"/><path d="M14.500 14.500L20 20" stroke="#cfcfcf" stroke-width="4" stroke-linecap="round"/><path d="M5.500 9h7M9 5.500v7" stroke="#cfcfcf" stroke-width="2"/></svg>
<svg style="left:531px;top:189px;" width="22" height="22" viewBox="0 0 22 22"><circle cx="9" cy="9" r="7" fill="none" stroke="#cfcfcf" stroke-width="3"/><path d="M14.500 14.500L20 20" stroke="#cfcfcf" stroke-width="4" stroke-linecap="round"/><path d="M5.500 9h7" stroke="#cfcfcf" stroke-width="2"/></svg>
<svg style="left:572px;top:189px;" width="22" height="22" viewBox="0 0 22 22"><circle cx="9" cy="9" r="7" fill="none" stroke="#cfcfcf" stroke-width="3"/><path d="M14.500 14.500L20 20" stroke="#cfcfcf" stroke-width="4" stroke-linecap="round"/></svg>
<div class="a" style="left:620px;top:188px;width:3px;height:22px;background:#b8b8b8;"></div>
<div class="a" style="left:935px;top:188px;width:3px;height:22px;background:#b8b8b8;"></div>
<svg style="left:648px;top:186px;" width="28" height="28" viewBox="0 0 28 28"><path d="M0 2h28" stroke="#8c8c8c" stroke-width="2" fill="none"/><rect x="3" y="5" width="8" height="21" stroke="#8c8c8c" stroke-width="2" fill="none"/><rect x="15" y="5" width="10" height="13" fill="#8c8c8c"/></svg>
<svg style="left:694px;top:186px;" width="28" height="28" viewBox="0 0 28 28"><path d="M0 14h28" stroke="#8c8c8c" stroke-width="2" fill="none"/><rect x="3" y="3" width="8" height="22" fill="#474747" stroke="#8c8c8c" stroke-width="2" fill="none"/><rect x="15" y="7" width="10" height="14" fill="#8c8c8c"/></svg>
<svg style="left:742px;top:186px;" width="28" height="28" viewBox="0 0 28 28"><path d="M0 27h28" stroke="#8c8c8c" stroke-width="2" fill="none"/><rect x="3" y="2" width="8" height="22" stroke="#8c8c8c" stroke-width="2" fill="none"/><rect x="15" y="10" width="10" height="14" fill="#8c8c8c"/></svg>
<svg style="left:789px;top:186px;" width="28" height="28" viewBox="0 0 28 28"><path d="M2 0v28" stroke="#8c8c8c" stroke-width="2" fill="none"/><rect x="5" y="3" width="14" height="9" fill="#8c8c8c"/><rect x="5" y="16" width="21" height="9" stroke="#8c8c8c" stroke-width="2" fill="none"/></svg>
<svg style="left:835px;top:186px;" width="28" height="28" viewBox="0 0 28 28"><path d="M14 0v28" stroke="#8c8c8c" stroke-width="2" fill="none"/><rect x="7" y="3" width="14" height="9" fill="#8c8c8c"/><rect x="3" y="16" width="22" height="9" fill="#474747" stroke="#8c8c8c" stroke-width="2" fill="none"/></svg>
<svg style="left:883px;top:186px;" width="28" height="28" viewBox="0 0 28 28"><path d="M26 0v28" stroke="#8c8c8c" stroke-width="2" fill="none"/><rect x="10" y="3" width="14" height="9" fill="#8c8c8c"/><rect x="3" y="16" width="21" height="9" stroke="#8c8c8c" stroke-width="2" fill="none"/></svg>
<svg style="left:950px;top:180px;" width="290" height="40" viewBox="950 180 290 40"><rect x="961.8" y="188.6" width="32.4" height="2.2" fill="#8c8c8c"/><rect x="972" y="190.8" width="12.0" height="7.4" fill="#8c8c8c"/><rect x="961.8" y="201.8" width="32.4" height="2.2" fill="#8c8c8c"/><rect x="968.8" y="204" width="17.8" height="7.2" fill="none" stroke="#8c8c8c" stroke-width="2"/><rect x="1008.2" y="191.8" width="31.8" height="2.2" fill="#8c8c8c"/><rect x="1018.5" y="188.6" width="11.8" height="9.6" fill="#8c8c8c"/><rect x="1008.2" y="206" width="31.8" height="2.2" fill="#8c8c8c"/><rect x="1015" y="203.4" width="18.0" height="7.8" fill="#474747" stroke="#8c8c8c" stroke-width="2"/><rect x="1064.3" y="188.6" width="11.8" height="7.4" fill="#8c8c8c"/><rect x="1054" y="196" width="31.8" height="2.2" fill="#8c8c8c"/><rect x="1061" y="202" width="18.4" height="8.0" fill="none" stroke="#8c8c8c" stroke-width="2"/><rect x="1054" y="210.2" width="31.8" height="2.2" fill="#8c8c8c"/><rect x="1105.6" y="184.8" width="2.2" height="28.8" fill="#8c8c8c"/><rect x="1107.8" y="191" width="7.2" height="17.2" fill="none" stroke="#8c8c8c" stroke-width="2"/><rect x="1120" y="184.8" width="2.2" height="28.8" fill="#8c8c8c"/><rect x="1122.2" y="193" width="7.8" height="13.2" fill="#8c8c8c"/><rect x="1155.7" y="184.8" width="2.2" height="5.2" fill="#8c8c8c"/><rect x="1155.7" y="209.2" width="2.2" height="4.4" fill="#8c8c8c"/><rect x="1153" y="191" width="7.6" height="17.2" fill="none" stroke="#8c8c8c" stroke-width="2"/><rect x="1169.7" y="184.8" width="2.2" height="28.8" fill="#8c8c8c"/><rect x="1166" y="193" width="9.6" height="13.2" fill="#8c8c8c"/><rect x="1198.8" y="191" width="7.1" height="17.2" fill="none" stroke="#8c8c8c" stroke-width="2"/><rect x="1205.9" y="184.8" width="2.2" height="28.8" fill="#8c8c8c"/><rect x="1211.8" y="193" width="8.2" height="13.2" fill="#8c8c8c"/><rect x="1220" y="184.8" width="2.2" height="28.8" fill="#8c8c8c"/></svg>
<div class="a" style="left:476px;top:224px;width:1698px;height:720px;background:#333333;border:2px solid #111;"></div>
<svg style="left:478px;top:226px;overflow:hidden;" width="1694" height="716" viewBox="478 226 1694 716"><rect x="522.96" y="226" width="2" height="716" fill="#fff" fill-opacity="0.042"/><rect x="570.66" y="226" width="2" height="716" fill="#fff" fill-opacity="0.042"/><rect x="618.36" y="226" width="2" height="716" fill="#fff" fill-opacity="0.042"/><rect x="666.06" y="226" width="2" height="716" fill="#fff" fill-opacity="0.115"/><rect x="713.76" y="226" width="2" height="716" fill="#fff" fill-opacity="0.042"/><rect x="761.46" y="226" width="2" height="716" fill="#fff" fill-opacity="0.042"/><rect x="809.16" y="226" width="2" height="716" fill="#fff" fill-opacity="0.042"/><rect x="856.86" y="226" width="2" height="716" fill="#fff" fill-opacity="0.042"/><rect x="904.56" y="226" width="2" height="716" fill="#fff" fill-opacity="0.115"/><rect x="952.26" y="226" width="2" height="716" fill="#fff" fill-opacity="0.042"/><rect x="999.96" y="226" width="2" height="716" fill="#fff" fill-opacity="0.042"/><rect x="1047.66" y="226" width="2" height="716" fill="#fff" fill-opacity="0.042"/><rect x="1095.36" y="226" width="2" height="716" fill="#fff" fill-opacity="0.042"/><rect x="1143.06" y="226" width="2" height="716" fill="#fff" fill-opacity="0.115"/><rect x="1190.76" y="226" width="2" height="716" fill="#fff" fill-opacity="0.042"/><rect x="1238.46" y="226" width="2" height="716" fill="#fff" fill-opacity="0.042"/><rect x="1286.16" y="226" width="2" height="716" fill="#fff" fill-opacity="0.042"/><rect x="1333.86" y="226" width="2" height="716" fill="#fff" fill-opacity="0.042"/><rect x="1381.56" y="226" width="2" height="716" fill="#fff" fill-opacity="0.115"/><rect x="1429.26" y="226" width="2" height="716" fill="#fff" fill-opacity="0.042"/><rect x="1476.96" y="226" width="2" height="716" fill="#fff" fill-opacity="0.042"/><rect x="1524.66" y="226" width="2" height="716" fill="#fff" fill-opacity="0.042"/><rect x="1572.36" y="226" width="2" height="716" fill="#fff" fill-opacity="0.042"/><rect x="1620.06" y="226" width="2" height="716" fill="#fff" fill-opacity="0.115"/><rect x="1667.76" y="226" width="2" height="716" fill="#fff" fill-opacity="0.042"/><rect x="1715.46" y="226" width="2" height="716" fill="#fff" fill-opacity="0.042"/><rect x="1763.16" y="226" width="2" height="716" fill="#fff" fill-opacity="0.042"/><rect x="1810.86" y="226" width="2" height="716" fill="#fff" fill-opacity="0.042"/><rect x="1858.56" y="226" width="2" height="716" fill="#fff" fill-opacity="0.115"/><rect x="1906.26" y="226" width="2" height="716" fill="#fff" fill-opacity="0.042"/><rect x="1953.96" y="226" width="2" height="716" fill="#fff" fill-opacity="0.042"/><rect x="2001.66" y="226" width="2" height="716" fill="#fff" fill-opacity="0.042"/><rect x="2049.36" y="226" width="2" height="716" fill="#fff" fill-opacity="0.042"/><rect x="2097.06" y="226" width="2" height="716" fill="#fff" fill-opacity="0.115"/><rect x="2144.76" y="226" width="2" height="716" fill="#fff" fill-opacity="0.042"/><rect x="478" y="901.90" width="1694" height="2" fill="#fff" fill-opacity="0.115"/><rect x="478" y="853.94" width="1694" height="2" fill="#fff" fill-opacity="0.042"/><rect x="478" y="805.98" width="1694" height="2" fill="#fff" fill-opacity="0.042"/><rect x="478" y="758.02" width="1694" height="2" fill="#fff" fill-opacity="0.042"/><rect x="478" y="710.06" width="1694" height="2" fill="#fff" fill-opacity="0.042"/><rect x="478" y="662.10" width="1694" height="2" fill="#fff" fill-opacity="0.115"/><rect x="478" y="614.50" width="1694" height="2" fill="#fff" fill-opacity="0.042"/><rect x="478" y="566.90" width="1694" height="2" fill="#fff" fill-opacity="0.042"/><rect x="478" y="519.30" width="1694" height="2" fill="#fff" fill-opacity="0.042"/><rect x="478" y="471.70" width="1694" height="2" fill="#fff" fill-opacity="0.042"/><rect x="478" y="424.10" width="1694" height="2" fill="#fff" fill-opacity="0.115"/><rect x="478" y="376.50" width="1694" height="2" fill="#fff" fill-opacity="0.042"/><rect x="478" y="328.90" width="1694" height="2" fill="#fff" fill-opacity="0.042"/><rect x="478" y="281.30" width="1694" height="2" fill="#fff" fill-opacity="0.042"/><rect x="478" y="233.70" width="1694" height="2" fill="#fff" fill-opacity="0.042"/><defs><pattern id="dia" x="1219.4" y="289.3" width="102.2" height="117.4" patternUnits="userSpaceOnUse"><rect width="102.2" height="117.4" fill="#cfcfcb"/><path d="M51.100 -6.500V6.500L102.200 52.200V65.200L51.100 110.900V123.900M51.100 110.900L0 65.200V52.200L51.100 6.500" fill="none" stroke="#dddddb" stroke-width="4.400" stroke-linejoin="round"/></pattern></defs><rect x="1146" y="226" width="358.300" height="716" fill="url(#dia)"/><rect x="1147" y="267.800" width="356.300" height="635.200" fill="none" stroke="#9c1fa8" stroke-width="2"/><rect x="1325.100" y="544.900" width="39.700" height="40.200" fill="#7096e0" fill-opacity="0.800" stroke="#1e5ae0" stroke-width="2"/><path d="M1325.100 544V385" stroke="#6ec864" stroke-width="2"/><path d="M1314 385.800L1325 352.400L1336 385.800Z" fill="#6ec864"/><path d="M1365.800 585H1526" stroke="#eb3420" stroke-width="2.400"/><path d="M1524.500 573.800L1558.200 585L1524.500 596.300Z" fill="#eb3420"/><g font-family="Liberation Sans,sans-serif" font-size="24.500" fill="#fff" fill-opacity="0.620" letter-spacing="0.7"><text x="439.1" y="925.800">-1,500</text><text x="677.6" y="925.800">-1,000</text><text x="916.1" y="925.800">-500</text><text x="1154.6" y="925.800">0</text><text x="1393.1" y="925.800">500</text><text x="1631.6" y="925.800">1,000</text><text x="1870.1" y="925.800">1,500</text><text x="2108.6" y="925.800">2,000</text><text x="488.500" y="895.7">0</text><text x="488.500" y="655.9">500</text><text x="488.500" y="417.9">1,000</text></g></svg>
<div class="t " style="top:227.5px;height:48px;line-height:48px;font-size:24px;color:#878787;font-weight:700;-webkit-text-stroke-width:0.4px;letter-spacing:0.39px;right:718.5px;-webkit-text-stroke:0;">使用鼠标右键平移视窗焦点，使用滚轮缩放视图</div>
<div class="t " style="top:940px;height:50px;line-height:50px;font-size:25px;color:#b8b8b8;font-weight:700;-webkit-text-stroke-width:0.4px;letter-spacing:-0.45px;left:480px;">Canvas/mask_prefab/mask_node</div>
<div class="a" style="left:472px;top:998px;width:1706px;height:532px;background:#1f1f1f;"></div>
<div class="a" style="left:474px;top:1000px;width:1702px;height:44px;background:#333333;border-top:2px solid #6a6a6a;border-left:2px solid #595959;border-right:2px solid #595959;border-bottom:2px solid #1f1f1f;"></div>
<div class="a" style="left:474px;top:1044px;width:1702px;height:484px;background:#474747;border:2px solid #595959;border-top-color:#6a6a6a;"></div>
<div class="a" style="left:474px;top:1000px;width:196px;height:46px;background:#474747;border-top:2px solid #6a6a6a;border-left:2px solid #595959;border-right:2px solid #595959;"></div>
<div class="a" style="left:670px;top:1000px;width:2px;height:44px;background:#1f1f1f;"></div>
<div class="a" style="left:672px;top:1000px;width:202px;height:44px;background:#333333;border-top:2px solid #6a6a6a;border-left:2px solid #595959;border-right:2px solid #595959;border-bottom:2px solid #1f1f1f;"></div>
<div class="a" style="left:874px;top:1000px;width:2px;height:44px;background:#1f1f1f;"></div>
<svg style="left:491px;top:1014px;" width="30" height="24" viewBox="0 0 30 24"><path d="M2 2l9 9.500-9 9.500" fill="none" stroke="#6e6e6e" stroke-width="4.500"/><path d="M14 4h15M14 12h15M14 20h15" stroke="#6e6e6e" stroke-width="4"/></svg>
<div class="t " style="top:1001.3px;height:48px;line-height:48px;font-size:24px;color:#bdbdbd;left:528px;-webkit-text-stroke:0;">控制台</div>
<svg style="left:687px;top:1011px;" width="34" height="26" viewBox="0 0 34 26"><path d="M5 19L11 6L20 18L28 10" fill="none" stroke="#777" stroke-width="9" stroke-linecap="round" stroke-linejoin="round"/><circle cx="11" cy="7" r="2" fill="#333"/><circle cx="20" cy="18" r="2" fill="#333"/><circle cx="28" cy="10" r="2" fill="#333"/></svg>
<div class="t " style="top:1001.3px;height:48px;line-height:48px;font-size:24px;color:#bdbdbd;left:726px;-webkit-text-stroke:0;">动画编辑器</div>
<svg style="left:2093px;top:1014.2px;" width="18" height="18" viewBox="0 0 18 18"><rect x="5" y="1" width="12" height="11" fill="#2c2c2c" stroke="#777" stroke-width="2.200"/><rect x="1" y="6" width="12" height="11" fill="#333" stroke="#777" stroke-width="2.200"/></svg>
<svg style="left:2141.3px;top:1015.2px;" width="19" height="16" viewBox="0 0 19 16"><path d="M1.500 2.200h16M1.500 8h16M1.500 13.800h16" stroke="#888" stroke-width="3" stroke-linecap="round" fill="none"/></svg>
<svg style="left:510px;top:1067px;" width="21" height="21" viewBox="0 0 21 21"><circle cx="10.500" cy="10.500" r="8.500" fill="none" stroke="#e38086" stroke-width="3"/><path d="M16.500 4.500L4.500 16.500" stroke="#e38086" stroke-width="3"/></svg>
<svg style="left:567px;top:1065px;" width="20" height="25" viewBox="0 0 20 25"><path d="M1.500 1.500h11l6 6v16h-17z" fill="none" stroke="#cfcfcf" stroke-width="2"/><path d="M12.500 1.500v6h6" fill="none" stroke="#cfcfcf" stroke-width="2"/><path d="M5 11.500h10M5 15.500h10M5 19.500h10" stroke="#cfcfcf" stroke-width="2"/></svg>
<div class="inp" style="left:608px;top:1056px;width:286px;height:44px;"></div>
<div class="a" style="left:906px;top:1064px;width:30px;height:30px;background:#252525;border:2px solid #8a8a8a;"></div>
<div class="t " style="top:1056.3px;height:46px;line-height:46px;font-size:23px;color:#bdbdbd;left:944px;-webkit-text-stroke:0;">正则</div>
<div class="btn" style="left:1005px;top:1055px;width:165px;height:46px;"></div>
<div class="t " style="top:1053px;height:48px;line-height:48px;font-size:24px;color:#bdbdbd;left:1025px;">All</div>
<svg style="left:1133.0px;top:1071.0px;" width="16" height="14" viewBox="0 0 16 14"><path d="M0 0H16L8.0 14Z" fill="#bdbdbd"/></svg>
<svg style="left:1190px;top:1066px;" width="24" height="24" viewBox="0 0 24 24"><path d="M3 6V2h18v4M12 2v13M8 15h8" fill="none" stroke="#cfcfcf" stroke-width="2.600"/><path d="M2 20h20" stroke="#cfcfcf" stroke-width="2"/><path d="M5 17l-4 3 4 3zM19 17l4 3-4 3z" fill="#cfcfcf"/></svg>
<div class="btn" style="left:1226px;top:1055px;width:102px;height:46px;"></div>
<div class="t " style="top:1053px;height:48px;line-height:48px;font-size:24px;color:#bdbdbd;left:1248px;">14</div>
<svg style="left:1290.0px;top:1071.0px;" width="16" height="14" viewBox="0 0 16 14"><path d="M0 0H16L8.0 14Z" fill="#bdbdbd"/></svg>
<svg style="left:2125px;top:1062px;" width="22" height="22" viewBox="0 0 22 22"><rect x="1.900" y="2.400" width="17.600" height="17.600" rx="2.500" fill="#343434" stroke="#d0d0d0" stroke-width="3.400"/><path d="M5.500 7.500h11L11 15z" fill="#cfcfcf"/></svg>
<div class="a" style="left:476px;top:1110px;width:1698px;height:416px;background:#323232;border:2px solid #0c0c0c;"></div>
<div class="a" style="left:478px;top:1112px;width:1672px;height:55px;background:#3a3a3a;"></div>
<svg style="left:498px;top:1123.5px;" width="28.5" height="27" viewBox="0 0 28.5 27"><path d="M14.250 2.500L26.500 24.500H2Z" fill="#daa550" stroke="#daa550" stroke-width="4" stroke-linejoin="round"/><rect x="12.300" y="9" width="4" height="8.500" fill="#333"/><rect x="12.300" y="19.300" width="4" height="3.700" fill="#333"/></svg>
<svg style="left:546.25px;top:1129.5px;" width="9.5" height="17" viewBox="0 0 9.5 17"><path d="M0 0V17L9.5 8.5Z" fill="#daa550"/></svg>
<div class="t m" style="top:1109.5px;height:56px;line-height:56px;font-size:28px;color:#d8a452;left:570px;-webkit-text-stroke:0.65px #d8a452;">Please change the definition of property 'bgm' in class 'StartScene'. Starting from v1.10,</div>
<div class="a" style="left:478px;top:1167px;width:1672px;height:56px;background:#323232;box-shadow:inset 0 3px 4px -2px #262626;"></div>
<svg style="left:498px;top:1179.5px;" width="28.5" height="27" viewBox="0 0 28.5 27"><path d="M14.250 2.500L26.500 24.500H2Z" fill="#daa550" stroke="#daa550" stroke-width="4" stroke-linejoin="round"/><rect x="12.300" y="9" width="4" height="8.500" fill="#333"/><rect x="12.300" y="19.300" width="4" height="3.700" fill="#333"/></svg>
<svg style="left:546.25px;top:1185.5px;" width="9.5" height="17" viewBox="0 0 9.5 17"><path d="M0 0V17L9.5 8.5Z" fill="#daa550"/></svg>
<div class="t m" style="top:1165.5px;height:56px;line-height:56px;font-size:28px;color:#d8a452;left:570px;-webkit-text-stroke:0.65px #d8a452;">Please change the definition of property 'bgm' in class 'AudioMgr'. Starting from v1.10,</div>
<div class="a" style="left:478px;top:1223px;width:1672px;height:56px;background:#3a3a3a;"></div>
<svg style="left:498px;top:1235.5px;" width="28.5" height="27" viewBox="0 0 28.5 27"><path d="M14.250 2.500L26.500 24.500H2Z" fill="#daa550" stroke="#daa550" stroke-width="4" stroke-linejoin="round"/><rect x="12.300" y="9" width="4" height="8.500" fill="#333"/><rect x="12.300" y="19.300" width="4" height="3.700" fill="#333"/></svg>
<svg style="left:546.25px;top:1241.5px;" width="9.5" height="17" viewBox="0 0 9.5 17"><path d="M0 0V17L9.5 8.5Z" fill="#daa550"/></svg>
<div class="t m" style="top:1221.5px;height:56px;line-height:56px;font-size:28px;color:#d8a452;left:570px;-webkit-text-stroke:0.65px #d8a452;">Please change the definition of property 'bgm' in class 'StartScene'. Starting from v1.10,</div>
<div class="a" style="left:478px;top:1279px;width:1672px;height:56px;background:#323232;box-shadow:inset 0 3px 4px -2px #262626;"></div>
<svg style="left:498px;top:1291.5px;" width="28.5" height="27" viewBox="0 0 28.5 27"><path d="M14.250 2.500L26.500 24.500H2Z" fill="#daa550" stroke="#daa550" stroke-width="4" stroke-linejoin="round"/><rect x="12.300" y="9" width="4" height="8.500" fill="#333"/><rect x="12.300" y="19.300" width="4" height="3.700" fill="#333"/></svg>
<svg style="left:546.25px;top:1297.5px;" width="9.5" height="17" viewBox="0 0 9.5 17"><path d="M0 0V17L9.5 8.5Z" fill="#daa550"/></svg>
<div class="t m" style="top:1277.5px;height:56px;line-height:56px;font-size:28px;color:#d8a452;left:570px;-webkit-text-stroke:0.65px #d8a452;">Please change the definition of property 'bgm' in class 'AudioMgr'. Starting from v1.10,</div>
<div class="a" style="left:478px;top:1335px;width:1672px;height:56px;background:#3a3a3a;"></div>
<svg style="left:498px;top:1347.5px;" width="28.5" height="27" viewBox="0 0 28.5 27"><path d="M14.250 2.500L26.500 24.500H2Z" fill="#daa550" stroke="#daa550" stroke-width="4" stroke-linejoin="round"/><rect x="12.300" y="9" width="4" height="8.500" fill="#333"/><rect x="12.300" y="19.300" width="4" height="3.700" fill="#333"/></svg>
<svg style="left:546.25px;top:1353.5px;" width="9.5" height="17" viewBox="0 0 9.5 17"><path d="M0 0V17L9.5 8.5Z" fill="#daa550"/></svg>
<div class="t m" style="top:1333.5px;height:56px;line-height:56px;font-size:28px;color:#d8a452;left:570px;-webkit-text-stroke:0.65px #d8a452;">Please change the definition of property 'bgm' in class 'StartScene'. Starting from v1.10,</div>
<div class="a" style="left:478px;top:1391px;width:1672px;height:56px;background:#323232;box-shadow:inset 0 3px 4px -2px #262626;"></div>
<svg style="left:498px;top:1403.5px;" width="28.5" height="27" viewBox="0 0 28.5 27"><path d="M14.250 2.500L26.500 24.500H2Z" fill="#daa550" stroke="#daa550" stroke-width="4" stroke-linejoin="round"/><rect x="12.300" y="9" width="4" height="8.500" fill="#333"/><rect x="12.300" y="19.300" width="4" height="3.700" fill="#333"/></svg>
<svg style="left:546.25px;top:1409.5px;" width="9.5" height="17" viewBox="0 0 9.5 17"><path d="M0 0V17L9.5 8.5Z" fill="#daa550"/></svg>
<div class="t m" style="top:1389.5px;height:56px;line-height:56px;font-size:28px;color:#d8a452;left:570px;-webkit-text-stroke:0.65px #d8a452;">Please change the definition of property 'bgm' in class 'AudioMgr'. Starting from v1.10,</div>
<div class="a" style="left:478px;top:1447px;width:1672px;height:56px;background:#3a3a3a;"></div>
<svg style="left:498px;top:1459.5px;" width="28.5" height="27" viewBox="0 0 28.5 27"><path d="M14.250 2.500L26.500 24.500H2Z" fill="#daa550" stroke="#daa550" stroke-width="4" stroke-linejoin="round"/><rect x="12.300" y="9" width="4" height="8.500" fill="#333"/><rect x="12.300" y="19.300" width="4" height="3.700" fill="#333"/></svg>
<svg style="left:546.25px;top:1465.5px;" width="9.5" height="17" viewBox="0 0 9.5 17"><path d="M0 0V17L9.5 8.5Z" fill="#daa550"/></svg>
<div class="t m" style="top:1445.5px;height:56px;line-height:56px;font-size:28px;color:#d8a452;left:570px;-webkit-text-stroke:0.65px #d8a452;">Please change the definition of property 'bgm' in class 'StartScene'. Starting from v1.10,</div>
<div class="a" style="left:2150px;top:1112px;width:22px;height:412px;background:#2c2c2c;"></div>
<div class="a" style="left:488px;top:1511px;width:1652px;height:2px;background:#181818;"></div>
<div class="a" style="left:2160.3px;top:1122px;width:1.7px;height:378px;background:#181818;"></div>
<div class="a" style="left:2157px;top:1292px;width:7px;height:18px;background:#8a8a8a;border-radius:2px;"></div>
<div class="a" style="left:2184px;top:126px;width:690px;height:1404px;background:#1f1f1f;"></div>
<div class="a" style="left:2186px;top:128px;width:686px;height:44px;background:#333333;border-top:2px solid #6a6a6a;border-left:2px solid #595959;border-right:2px solid #595959;border-bottom:2px solid #1f1f1f;"></div>
<div class="a" style="left:2186px;top:172px;width:686px;height:1356px;background:#474747;border:2px solid #595959;border-top-color:#6a6a6a;"></div>
<div class="a" style="left:2186px;top:128px;width:196px;height:44px;background:#333333;border-top:2px solid #6a6a6a;border-left:2px solid #595959;border-right:2px solid #595959;border-bottom:2px solid #1f1f1f;"></div>
<div class="a" style="left:2382px;top:128px;width:2px;height:44px;background:#1f1f1f;"></div>
<div class="a" style="left:2384px;top:128px;width:202px;height:46px;background:#474747;border-top:2px solid #6a6a6a;border-left:2px solid #595959;border-right:2px solid #595959;"></div>
<div class="a" style="left:2586px;top:128px;width:2px;height:44px;background:#1f1f1f;"></div>
<svg style="left:2207px;top:141px;" width="26" height="22" viewBox="0 0 26 22"><path d="M13 3.500L23.500 20H2.500Z" fill="none" stroke="#a0a0a0" stroke-width="4" stroke-linejoin="round"/></svg>
<div class="t " style="top:129.3px;height:48px;line-height:48px;font-size:24px;color:#bdbdbd;left:2241px;-webkit-text-stroke:0;">控件库</div>
<svg style="left:2402px;top:139px;" width="28" height="28" viewBox="0 0 28 28"><path d="M27.79 11.59L27.79 16.41L24.03 16.58L22.92 19.27L25.45 22.05L22.05 25.45L19.27 22.92L16.58 24.03L16.41 27.79L11.59 27.79L11.42 24.03L8.73 22.92L5.95 25.45L2.55 22.05L5.08 19.27L3.97 16.58L0.21 16.41L0.21 11.59L3.97 11.42L5.08 8.73L2.55 5.95L5.95 2.55L8.73 5.08L11.42 3.97L11.59 0.21L16.41 0.21L16.58 3.97L19.27 5.08L22.05 2.55L25.45 5.95L22.92 8.73L24.03 11.42Z" fill="#777" stroke="#777" stroke-width="1" stroke-linejoin="round"/><circle cx="14" cy="14" r="4.76" fill="#474747"/></svg>
<svg style="left:2410px;top:147px;" width="12" height="12" viewBox="0 0 12 12"><circle cx="6" cy="6" r="4.500" fill="#777" stroke="#555" stroke-width="2"/></svg>
<div class="t " style="top:129.3px;height:48px;line-height:48px;font-size:24px;color:#bdbdbd;left:2439px;-webkit-text-stroke:0;">属性检查器</div>
<svg style="left:2837.5px;top:143px;" width="19" height="16" viewBox="0 0 19 16"><path d="M1.500 2.200h16M1.500 8h16M1.500 13.800h16" stroke="#888" stroke-width="3" stroke-linecap="round" fill="none"/></svg>
<svg style="left:2219px;top:197px;" width="21" height="20" viewBox="0 0 21 20"><path d="M3.500 8.500q-3-3 0-5.500t5.500 0l2 2M17.500 11.500q3 3 0 5.500t-5.500 0l-2-2M7 12l7-4" fill="none" stroke="#7fb0ea" stroke-width="2.400"/><path d="M14 1l1.500 3M18 4l-2 1.500M3 19l1.500-3M0.500 15l2.500-1" stroke="#7fb0ea" stroke-width="1.400"/></svg>
<div class="t " style="top:181px;height:52px;line-height:52px;font-size:26px;color:#c4c4c4;font-weight:700;-webkit-text-stroke-width:0.4px;letter-spacing:-0.5px;left:2256px;">Prefab:</div>
<div class="t " style="top:185.5px;height:43.0px;line-height:43.0px;font-size:21.5px;color:#c4c4c4;font-weight:700;-webkit-text-stroke-width:0.4px;letter-spacing:-0.3px;left:2363px;">mask_prefab</div>
<div class="t " style="top:188.2px;height:40px;line-height:40px;font-size:20px;color:#c4c4c4;font-weight:700;-webkit-text-stroke-width:0.4px;left:2658px;-webkit-text-stroke:0;">选择</div>
<div class="t " style="top:188.2px;height:40px;line-height:40px;font-size:20px;color:#c4c4c4;font-weight:700;-webkit-text-stroke-width:0.4px;left:2728px;-webkit-text-stroke:0;">回退</div>
<div class="t " style="top:188.2px;height:40px;line-height:40px;font-size:20px;color:#c4c4c4;font-weight:700;-webkit-text-stroke-width:0.4px;left:2797px;-webkit-text-stroke:0;">保存</div>
<div class="a" style="left:2208px;top:230px;width:642px;height:2px;background:#666666;"></div>
<div class="a" style="left:2208px;top:254px;width:30px;height:30px;background:#252525;border:2px solid #8a8a8a;"></div>
<svg style="left:2208px;top:254px;" width="30" height="30" viewBox="0 0 30 30"><path d="M7 14L12.600 19.600L22.800 9" fill="none" stroke="#f99a38" stroke-width="5" stroke-linecap="round" stroke-linejoin="round"/></svg>
<div class="inp" style="left:2244px;top:246px;width:558px;height:44px;"></div>
<div class="t " style="top:244.5px;height:48px;line-height:48px;font-size:24px;color:#f99a38;letter-spacing:0.25px;left:2261px;">mask_node</div>
<svg style="left:2829.0px;top:257.5px;" width="19" height="19" viewBox="0 0 19 19"><path d="M9.5 0V19M0 9.5H19" stroke="#d0d0d0" stroke-width="5" /></svg>
<svg style="left:2211.5px;top:331.0px;" width="13" height="13" viewBox="0 0 13 13"><path d="M0 0H13L6.5 13Z" fill="#c0c0c0"/></svg>
<div class="t " style="top:314px;height:48px;line-height:48px;font-size:24px;color:#cccccc;font-weight:700;-webkit-text-stroke-width:0.4px;letter-spacing:0.9px;left:2234px;">Node</div>
<svg style="left:2818.5px;top:330px;" width="18" height="18" viewBox="0 0 18 18"><path d="M17.87 7.45L17.87 10.55L15.45 10.66L14.73 12.39L16.36 14.18L14.18 16.36L12.39 14.73L10.66 15.45L10.55 17.87L7.45 17.87L7.34 15.45L5.61 14.73L3.82 16.36L1.64 14.18L3.27 12.39L2.55 10.66L0.13 10.55L0.13 7.45L2.55 7.34L3.27 5.61L1.64 3.82L3.82 1.64L5.61 3.27L7.34 2.55L7.45 0.13L10.55 0.13L10.66 2.55L12.39 3.27L14.18 1.64L16.36 3.82L14.73 5.61L15.45 7.34Z" fill="#c8c8c8" stroke="#c8c8c8" stroke-width="1" stroke-linejoin="round"/><circle cx="9" cy="9" r="3.06" fill="#474747"/></svg>
<div class="a" style="left:2208px;top:360px;width:642px;height:2px;background:#666666;"></div>
<div class="t " style="top:379.5px;height:48px;line-height:48px;font-size:24px;color:#c2c2c2;letter-spacing:0.62px;left:2234px;">Position</div>
<div class="t " style="top:379px;height:48px;line-height:48px;font-size:24px;color:#c2c2c2;left:2443px;">X</div>
<div class="inp" style="left:2474px;top:380px;width:160px;height:44px;"></div>
<div class="a" style="left:2610px;top:382px;width:22px;height:40px;background:#4e4e4e;border-radius:0 4px 4px 0;"></div>
<div class="a" style="left:2610px;top:400px;width:22px;height:2px;background:#3d3d3d;"></div>
<div class="a" style="left:2610px;top:402px;width:22px;height:2px;background:#5f5f5f;"></div>
<svg style="left:2615.5px;top:388.5px;" width="11" height="6.5" viewBox="0 0 11 6.5"><path d="M0 6.500L5.500 0L11 6.500Z" fill="#1c1c1c"/></svg>
<svg style="left:2615.5px;top:410px;" width="11" height="6.5" viewBox="0 0 11 6.5"><path d="M0 0L5.500 6.500L11 0Z" fill="#1c1c1c"/></svg>
<div class="t " style="top:379.5px;height:48px;line-height:48px;font-size:24px;color:#f99a38;letter-spacing:0.6px;left:2491px;">0</div>
<div class="t " style="top:379px;height:48px;line-height:48px;font-size:24px;color:#c2c2c2;left:2656px;">Y</div>
<div class="inp" style="left:2687px;top:380px;width:161px;height:44px;"></div>
<div class="a" style="left:2824px;top:382px;width:22px;height:40px;background:#4e4e4e;border-radius:0 4px 4px 0;"></div>
<div class="a" style="left:2824px;top:400px;width:22px;height:2px;background:#3d3d3d;"></div>
<div class="a" style="left:2824px;top:402px;width:22px;height:2px;background:#5f5f5f;"></div>
<svg style="left:2829.5px;top:388.5px;" width="11" height="6.5" viewBox="0 0 11 6.5"><path d="M0 6.500L5.500 0L11 6.500Z" fill="#1c1c1c"/></svg>
<svg style="left:2829.5px;top:410px;" width="11" height="6.5" viewBox="0 0 11 6.5"><path d="M0 0L5.500 6.500L11 0Z" fill="#1c1c1c"/></svg>
<div class="t " style="top:379.5px;height:48px;line-height:48px;font-size:24px;color:#f99a38;letter-spacing:0.6px;left:2704px;">0</div>
<div class="t " style="top:439.5px;height:48px;line-height:48px;font-size:24px;color:#c2c2c2;letter-spacing:0.62px;left:2234px;">Rotation</div>
<div class="inp" style="left:2442px;top:440px;width:406px;height:44px;"></div>
<div class="a" style="left:2824px;top:442px;width:22px;height:40px;background:#4e4e4e;border-radius:0 4px 4px 0;"></div>
<div class="a" style="left:2824px;top:460px;width:22px;height:2px;background:#3d3d3d;"></div>
<div class="a" style="left:2824px;top:462px;width:22px;height:2px;background:#5f5f5f;"></div>
<svg style="left:2829.5px;top:448.5px;" width="11" height="6.5" viewBox="0 0 11 6.5"><path d="M0 6.500L5.500 0L11 6.500Z" fill="#1c1c1c"/></svg>
<svg style="left:2829.5px;top:470px;" width="11" height="6.5" viewBox="0 0 11 6.5"><path d="M0 0L5.500 6.500L11 0Z" fill="#1c1c1c"/></svg>
<div class="t " style="top:439.5px;height:48px;line-height:48px;font-size:24px;color:#f99a38;letter-spacing:0.6px;left:2459px;">0</div>
<div class="t " style="top:499.5px;height:48px;line-height:48px;font-size:24px;color:#c2c2c2;letter-spacing:0.62px;left:2234px;">Scale</div>
<div class="t " style="top:499px;height:48px;line-height:48px;font-size:24px;color:#c2c2c2;left:2443px;">X</div>
<div class="inp" style="left:2474px;top:500px;width:160px;height:44px;"></div>
<div class="a" style="left:2610px;top:502px;width:22px;height:40px;background:#4e4e4e;border-radius:0 4px 4px 0;"></div>
<div class="a" style="left:2610px;top:520px;width:22px;height:2px;background:#3d3d3d;"></div>
<div class="a" style="left:2610px;top:522px;width:22px;height:2px;background:#5f5f5f;"></div>
<svg style="left:2615.5px;top:508.5px;" width="11" height="6.5" viewBox="0 0 11 6.5"><path d="M0 6.500L5.500 0L11 6.500Z" fill="#1c1c1c"/></svg>
<svg style="left:2615.5px;top:530px;" width="11" height="6.5" viewBox="0 0 11 6.5"><path d="M0 0L5.500 6.500L11 0Z" fill="#1c1c1c"/></svg>
<div class="t " style="top:499.5px;height:48px;line-height:48px;font-size:24px;color:#f99a38;letter-spacing:0.6px;left:2491px;">1</div>
<div class="t " style="top:499px;height:48px;line-height:48px;font-size:24px;color:#c2c2c2;left:2656px;">Y</div>
<div class="inp" style="left:2687px;top:500px;width:161px;height:44px;"></div>
<div class="a" style="left:2824px;top:502px;width:22px;height:40px;background:#4e4e4e;border-radius:0 4px 4px 0;"></div>
<div class="a" style="left:2824px;top:520px;width:22px;height:2px;background:#3d3d3d;"></div>
<div class="a" style="left:2824px;top:522px;width:22px;height:2px;background:#5f5f5f;"></div>
<svg style="left:2829.5px;top:508.5px;" width="11" height="6.5" viewBox="0 0 11 6.5"><path d="M0 6.500L5.500 0L11 6.500Z" fill="#1c1c1c"/></svg>
<svg style="left:2829.5px;top:530px;" width="11" height="6.5" viewBox="0 0 11 6.5"><path d="M0 0L5.500 6.500L11 0Z" fill="#1c1c1c"/></svg>
<div class="t " style="top:499.5px;height:48px;line-height:48px;font-size:24px;color:#f99a38;letter-spacing:0.6px;left:2704px;">1</div>
<div class="t " style="top:559.5px;height:48px;line-height:48px;font-size:24px;color:#c2c2c2;letter-spacing:0.62px;left:2234px;">Anchor</div>
<div class="t " style="top:559px;height:48px;line-height:48px;font-size:24px;color:#c2c2c2;left:2443px;">X</div>
<div class="inp" style="left:2474px;top:560px;width:160px;height:44px;"></div>
<div class="a" style="left:2610px;top:562px;width:22px;height:40px;background:#4e4e4e;border-radius:0 4px 4px 0;"></div>
<div class="a" style="left:2610px;top:580px;width:22px;height:2px;background:#3d3d3d;"></div>
<div class="a" style="left:2610px;top:582px;width:22px;height:2px;background:#5f5f5f;"></div>
<svg style="left:2615.5px;top:568.5px;" width="11" height="6.5" viewBox="0 0 11 6.5"><path d="M0 6.500L5.500 0L11 6.500Z" fill="#1c1c1c"/></svg>
<svg style="left:2615.5px;top:590px;" width="11" height="6.5" viewBox="0 0 11 6.5"><path d="M0 0L5.500 6.500L11 0Z" fill="#1c1c1c"/></svg>
<div class="t " style="top:559.5px;height:48px;line-height:48px;font-size:24px;color:#f99a38;letter-spacing:0.6px;left:2491px;">0.5</div>
<div class="t " style="top:559px;height:48px;line-height:48px;font-size:24px;color:#c2c2c2;left:2656px;">Y</div>
<div class="inp" style="left:2687px;top:560px;width:161px;height:44px;"></div>
<div class="a" style="left:2824px;top:562px;width:22px;height:40px;background:#4e4e4e;border-radius:0 4px 4px 0;"></div>
<div class="a" style="left:2824px;top:580px;width:22px;height:2px;background:#3d3d3d;"></div>
<div class="a" style="left:2824px;top:582px;width:22px;height:2px;background:#5f5f5f;"></div>
<svg style="left:2829.5px;top:568.5px;" width="11" height="6.5" viewBox="0 0 11 6.5"><path d="M0 6.500L5.500 0L11 6.500Z" fill="#1c1c1c"/></svg>
<svg style="left:2829.5px;top:590px;" width="11" height="6.5" viewBox="0 0 11 6.5"><path d="M0 0L5.500 6.500L11 0Z" fill="#1c1c1c"/></svg>
<div class="t " style="top:559.5px;height:48px;line-height:48px;font-size:24px;color:#f99a38;letter-spacing:0.6px;left:2704px;">0.5</div>
<div class="t " style="top:619.5px;height:48px;line-height:48px;font-size:24px;color:#c2c2c2;letter-spacing:0.62px;left:2234px;">Size</div>
<div class="t " style="top:619px;height:48px;line-height:48px;font-size:24px;color:#c2c2c2;left:2442px;">W</div>
<div class="inp" style="left:2482px;top:620px;width:152px;height:44px;"></div>
<div class="a" style="left:2610px;top:622px;width:22px;height:40px;background:#4e4e4e;border-radius:0 4px 4px 0;"></div>
<div class="a" style="left:2610px;top:640px;width:22px;height:2px;background:#3d3d3d;"></div>
<div class="a" style="left:2610px;top:642px;width:22px;height:2px;background:#5f5f5f;"></div>
<svg style="left:2615.5px;top:628.5px;" width="11" height="6.5" viewBox="0 0 11 6.5"><path d="M0 6.500L5.500 0L11 6.500Z" fill="#1c1c1c"/></svg>
<svg style="left:2615.5px;top:650px;" width="11" height="6.5" viewBox="0 0 11 6.5"><path d="M0 0L5.500 6.500L11 0Z" fill="#1c1c1c"/></svg>
<div class="t " style="top:619.5px;height:48px;line-height:48px;font-size:24px;color:#f99a38;letter-spacing:0.6px;left:2499px;">0</div>
<div class="t " style="top:619px;height:48px;line-height:48px;font-size:24px;color:#c2c2c2;left:2656px;">H</div>
<div class="inp" style="left:2689px;top:620px;width:159px;height:44px;"></div>
<div class="a" style="left:2824px;top:622px;width:22px;height:40px;background:#4e4e4e;border-radius:0 4px 4px 0;"></div>
<div class="a" style="left:2824px;top:640px;width:22px;height:2px;background:#3d3d3d;"></div>
<div class="a" style="left:2824px;top:642px;width:22px;height:2px;background:#5f5f5f;"></div>
<svg style="left:2829.5px;top:628.5px;" width="11" height="6.5" viewBox="0 0 11 6.5"><path d="M0 6.500L5.500 0L11 6.500Z" fill="#1c1c1c"/></svg>
<svg style="left:2829.5px;top:650px;" width="11" height="6.5" viewBox="0 0 11 6.5"><path d="M0 0L5.500 6.500L11 0Z" fill="#1c1c1c"/></svg>
<div class="t " style="top:619.5px;height:48px;line-height:48px;font-size:24px;color:#f99a38;letter-spacing:0.6px;left:2706px;">0</div>
<div class="t " style="top:679.5px;height:48px;line-height:48px;font-size:24px;color:#c2c2c2;letter-spacing:0.62px;left:2234px;">Color</div>
<div class="a" style="left:2442px;top:678px;width:406px;height:48px;background:#ffffff;border:2px solid #8c8c8c;"></div>
<div class="a" style="left:2444px;top:680px;width:402px;height:44px;border:2px solid #050505;"></div>
<div class="a" style="left:2446px;top:714px;width:398px;height:2px;background:#050505;"></div>
<div class="t " style="top:739.5px;height:48px;line-height:48px;font-size:24px;color:#c2c2c2;letter-spacing:0.62px;left:2234px;">Opacity</div>
<div class="inp" style="left:2442px;top:740px;width:406px;height:44px;"></div>
<div class="a" style="left:2824px;top:742px;width:22px;height:40px;background:#4e4e4e;border-radius:0 4px 4px 0;"></div>
<div class="a" style="left:2824px;top:760px;width:22px;height:2px;background:#3d3d3d;"></div>
<div class="a" style="left:2824px;top:762px;width:22px;height:2px;background:#5f5f5f;"></div>
<svg style="left:2829.5px;top:748.5px;" width="11" height="6.5" viewBox="0 0 11 6.5"><path d="M0 6.500L5.500 0L11 6.500Z" fill="#1c1c1c"/></svg>
<svg style="left:2829.5px;top:770px;" width="11" height="6.5" viewBox="0 0 11 6.5"><path d="M0 0L5.500 6.500L11 0Z" fill="#1c1c1c"/></svg>
<div class="t " style="top:739.5px;height:48px;line-height:48px;font-size:24px;color:#f99a38;letter-spacing:0.6px;left:2459px;">255</div>
<div class="t " style="top:799.5px;height:48px;line-height:48px;font-size:24px;color:#c2c2c2;letter-spacing:0.62px;left:2234px;">Skew</div>
<div class="t " style="top:799px;height:48px;line-height:48px;font-size:24px;color:#c2c2c2;left:2443px;">X</div>
<div class="inp" style="left:2474px;top:800px;width:160px;height:44px;"></div>
<div class="a" style="left:2610px;top:802px;width:22px;height:40px;background:#4e4e4e;border-radius:0 4px 4px 0;"></div>
<div class="a" style="left:2610px;top:820px;width:22px;height:2px;background:#3d3d3d;"></div>
<div class="a" style="left:2610px;top:822px;width:22px;height:2px;background:#5f5f5f;"></div>
<svg style="left:2615.5px;top:808.5px;" width="11" height="6.5" viewBox="0 0 11 6.5"><path d="M0 6.500L5.500 0L11 6.500Z" fill="#1c1c1c"/></svg>
<svg style="left:2615.5px;top:830px;" width="11" height="6.5" viewBox="0 0 11 6.5"><path d="M0 0L5.500 6.500L11 0Z" fill="#1c1c1c"/></svg>
<div class="t " style="top:799.5px;height:48px;line-height:48px;font-size:24px;color:#f99a38;letter-spacing:0.6px;left:2491px;">0</div>
<div class="t " style="top:799px;height:48px;line-height:48px;font-size:24px;color:#c2c2c2;left:2656px;">Y</div>
<div class="inp" style="left:2687px;top:800px;width:161px;height:44px;"></div>
<div class="a" style="left:2824px;top:802px;width:22px;height:40px;background:#4e4e4e;border-radius:0 4px 4px 0;"></div>
<div class="a" style="left:2824px;top:820px;width:22px;height:2px;background:#3d3d3d;"></div>
<div class="a" style="left:2824px;top:822px;width:22px;height:2px;background:#5f5f5f;"></div>
<svg style="left:2829.5px;top:808.5px;" width="11" height="6.5" viewBox="0 0 11 6.5"><path d="M0 6.500L5.500 0L11 6.500Z" fill="#1c1c1c"/></svg>
<svg style="left:2829.5px;top:830px;" width="11" height="6.5" viewBox="0 0 11 6.5"><path d="M0 0L5.500 6.500L11 0Z" fill="#1c1c1c"/></svg>
<div class="t " style="top:799.5px;height:48px;line-height:48px;font-size:24px;color:#f99a38;letter-spacing:0.6px;left:2704px;">0</div>
<div class="t " style="top:859.5px;height:48px;line-height:48px;font-size:24px;color:#c2c2c2;letter-spacing:0.62px;left:2234px;">Group</div>
<div class="btn" style="left:2442px;top:858.5px;width:295px;height:47px;"></div>
<div class="t " style="top:859px;height:48px;line-height:48px;font-size:24px;color:#c2c2c2;letter-spacing:0.9px;left:2463px;">default</div>
<svg style="left:2700.0px;top:876.0px;" width="16" height="14" viewBox="0 0 16 14"><path d="M0 0H16L8.0 14Z" fill="#c2c2c2"/></svg>
<div class="btn" style="left:2745px;top:861px;width:103px;height:43px;background:linear-gradient(#4c8bc6,#3b72ad);border-color:#15243a;"></div>
<div class="t " style="top:864px;height:40px;line-height:40px;font-size:20px;color:#ffffff;font-weight:700;-webkit-text-stroke-width:0.4px;left:1796.5px;width:2000px;text-align:center;-webkit-text-stroke:0;">编辑</div>
<svg style="left:2211.5px;top:958.0px;" width="13" height="13" viewBox="0 0 13 13"><path d="M0 0H13L6.5 13Z" fill="#c0c0c0"/></svg>
<div class="a" style="left:2234px;top:950px;width:30px;height:30px;background:#252525;border:2px solid #8a8a8a;"></div>
<svg style="left:2234px;top:950px;" width="30" height="30" viewBox="0 0 30 30"><path d="M7 14L12.600 19.600L22.800 9" fill="none" stroke="#f99a38" stroke-width="5" stroke-linecap="round" stroke-linejoin="round"/></svg>
<div class="t " style="top:942px;height:48px;line-height:48px;font-size:24px;color:#cccccc;font-weight:700;-webkit-text-stroke-width:0.4px;letter-spacing:1.1px;left:2270px;">Mask</div>
<svg style="left:2771px;top:957px;" width="20" height="20" viewBox="0 0 20 20"><path d="M5 1h14l-4 14H1z" fill="#c8c8c8"/><path d="M1 15q-1 4 3 4h10l1.500-3" fill="none" stroke="#c8c8c8" stroke-width="2"/><path d="M8 5h8M7 8.500h8" stroke="#474747" stroke-width="1.600"/></svg>
<svg style="left:2818.5px;top:957.5px;" width="18" height="18" viewBox="0 0 18 18"><path d="M17.87 7.45L17.87 10.55L15.45 10.66L14.73 12.39L16.36 14.18L14.18 16.36L12.39 14.73L10.66 15.45L10.55 17.87L7.45 17.87L7.34 15.45L5.61 14.73L3.82 16.36L1.64 14.18L3.27 12.39L2.55 10.66L0.13 10.55L0.13 7.45L2.55 7.34L3.27 5.61L1.64 3.82L3.82 1.64L5.61 3.27L7.34 2.55L7.45 0.13L10.55 0.13L10.66 2.55L12.39 3.27L14.18 1.64L16.36 3.82L14.73 5.61L15.45 7.34Z" fill="#c8c8c8" stroke="#c8c8c8" stroke-width="1" stroke-linejoin="round"/><circle cx="9" cy="9" r="3.06" fill="#474747"/></svg>
<div class="a" style="left:2208px;top:988px;width:642px;height:2px;background:#666666;"></div>
<div class="t " style="top:1007.5px;height:48px;line-height:48px;font-size:24px;color:#c2c2c2;letter-spacing:0.62px;left:2234px;">Type</div>
<div class="btn" style="left:2442px;top:1006.5px;width:406px;height:47px;"></div>
<div class="t " style="top:1007px;height:48px;line-height:48px;font-size:24px;color:#c2c2c2;letter-spacing:-0.8px;left:2463px;">ELLIPSE</div>
<svg style="left:2810.0px;top:1024.0px;" width="16" height="14" viewBox="0 0 16 14"><path d="M0 0H16L8.0 14Z" fill="#c2c2c2"/></svg>
<div class="t " style="top:1067.5px;height:48px;line-height:48px;font-size:24px;color:#c2c2c2;letter-spacing:0.62px;left:2234px;">Inverted</div>
<div class="a" style="left:2442px;top:1076px;width:30px;height:30px;background:#252525;border:2px solid #8a8a8a;"></div>
<svg style="left:2442px;top:1076px;" width="30" height="30" viewBox="0 0 30 30"><path d="M7 14L12.600 19.600L22.800 9" fill="none" stroke="#f99a38" stroke-width="5" stroke-linecap="round" stroke-linejoin="round"/></svg>
<div class="t " style="top:1127.5px;height:48px;line-height:48px;font-size:24px;color:#c2c2c2;letter-spacing:0.62px;left:2234px;">Segements</div>
<div class="inp" style="left:2442px;top:1128px;width:406px;height:44px;"></div>
<div class="a" style="left:2824px;top:1130px;width:22px;height:40px;background:#4e4e4e;border-radius:0 4px 4px 0;"></div>
<div class="a" style="left:2824px;top:1148px;width:22px;height:2px;background:#3d3d3d;"></div>
<div class="a" style="left:2824px;top:1150px;width:22px;height:2px;background:#5f5f5f;"></div>
<svg style="left:2829.5px;top:1136.5px;" width="11" height="6.5" viewBox="0 0 11 6.5"><path d="M0 6.500L5.500 0L11 6.500Z" fill="#1c1c1c"/></svg>
<svg style="left:2829.5px;top:1158px;" width="11" height="6.5" viewBox="0 0 11 6.5"><path d="M0 0L5.500 6.500L11 0Z" fill="#1c1c1c"/></svg>
<div class="t " style="top:1127.5px;height:48px;line-height:48px;font-size:24px;color:#f99a38;letter-spacing:0.6px;left:2459px;">3</div>
<div class="btn" style="left:2288px;top:1220px;width:480px;height:51px;"></div>
<div class="t " style="top:1223px;height:48px;line-height:48px;font-size:24px;color:#c2c2c2;font-weight:700;-webkit-text-stroke-width:0.4px;left:1528px;width:2000px;text-align:center;-webkit-text-stroke:0;">添加组件</div>
<svg style="left:14px;top:1545px;" width="140" height="30" viewBox="14 1545 140 30"><g fill="#969696"><path d="M15.900 1559.400L21 1552.400L26.100 1559.400H23.100V1564H33V1568.300H18.800V1559.400Z"/><path d="M41.700 1561.200L36.700 1568.300L31.700 1561.200H34.600V1556.800H25V1552.500H38.800V1561.200Z"/><ellipse cx="72.300" cy="1552" rx="10.500" ry="4.800"/><path d="M61.800 1555.500q10.500 5.500 21 0v4.500q-10.500 5.500-21 0zM61.800 1561.700q10.500 5.500 21 0v4.500q-10.500 5.500-21 0zM61.800 1567.800q10.500 5.500 21 0v1.200q-1 2.700-10.500 2.700t-10.500-2.700z"/><circle cx="114" cy="1560.300" r="4.200"/><rect x="146" y="1550" width="2.200" height="22"/></g><path d="M103 1560.300q11.200-12.500 22.500 0q-11.200 12.500-22.500 0z" fill="none" stroke="#969696" stroke-width="2.200"/><path d="M120.500 1550.500L109.500 1570" stroke="#333" stroke-width="5.500"/><path d="M119 1551L108.500 1569.500" stroke="#969696" stroke-width="2.400"/></svg>
<svg style="left:1417.5px;top:1545.5px;" width="23" height="22.5" viewBox="0 0 23 22.5"><path d="M11.500 1.500L21.500 20.700H1.500Z" fill="#a7a63b" stroke="#a7a63b" stroke-width="3" stroke-linejoin="round"/><rect x="9.900" y="7" width="3.200" height="7.500" fill="#333"/><rect x="9.900" y="16.200" width="3.200" height="3.200" fill="#333"/></svg>
<div class="t " style="top:1535.8px;height:52px;line-height:52px;font-size:26px;color:#a7a63b;font-weight:700;-webkit-text-stroke-width:0.4px;letter-spacing:-0.11px;right:317px;">db://assets/Texture/Start/bg_start.png has not been packed into AutoAtlas, please check it.</div>
<div class="a" style="left:2584px;top:1546px;width:2px;height:30px;background:#8a8a8a;"></div>
<div class="t " style="top:1535.8px;height:52px;line-height:52px;font-size:26px;color:#f59b37;font-weight:700;-webkit-text-stroke-width:0.4px;letter-spacing:-0.09px;right:16px;">Cocos Creator v2.0.5</div>
</div></body></html>
